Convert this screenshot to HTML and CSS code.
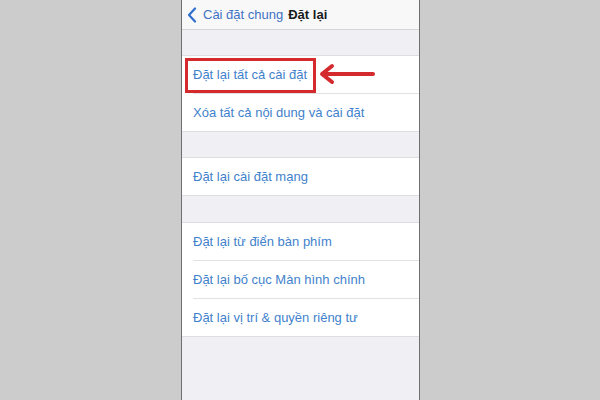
FILE: index.html
```html
<!DOCTYPE html>
<html lang="vi">
<head>
<meta charset="utf-8">
<link rel="stylesheet" href="styles.css">
</head>
<body>
<div class="page">
  <div class="phone">
    <div class="nav">
      <svg class="chev" width="10" height="16" viewBox="0 0 10 16"><path d="M8 1.5 L2 8 L8 14.5" fill="none" stroke="#2f6fd0" stroke-width="2.2" stroke-linecap="round" stroke-linejoin="round"/></svg>
      <span class="back">Cài đặt chung</span>
      <span class="title">Đặt lại</span>
    </div>
    <div class="gap g1"></div>
    <div class="group">
      <div class="row r38">
        <span class="label">Đặt lại tất cả cài đặt</span>
        <div class="hl"></div>
        <svg class="arrow" width="60" height="24" viewBox="0 0 60 24"><path d="M14 4 L4 12 L14 20" fill="none" stroke="#d42a2e" stroke-width="4" stroke-linecap="round" stroke-linejoin="round"/><path d="M5 12 L55 12" stroke="#d42a2e" stroke-width="4" stroke-linecap="round"/></svg>
      </div>
      <div class="row"><span class="label">Xóa tất cả nội dung và cài đặt</span></div>
    </div>
    <div class="gap"></div>
    <div class="group">
      <div class="row"><span class="label">Đặt lại cài đặt mạng</span></div>
    </div>
    <div class="gap g3"></div>
    <div class="group">
      <div class="row r38"><span class="label">Đặt lại từ điển bàn phím</span></div>
      <div class="row r38"><span class="label">Đặt lại bố cục Màn hình chính</span></div>
      <div class="row"><span class="label">Đặt lại vị trí &amp; quyền riêng tư</span></div>
    </div>
  </div>
</div>
</body>
</html>
```

FILE: styles.css
```css
*, *::before, *::after { box-sizing: border-box; }
html, body {
  margin: 0;
  padding: 0;
  background: #cccccc;
  font-family: "Liberation Sans", Arial, sans-serif;
}
.page {
  display: flex;
  justify-content: center;
  width: 600px;
  height: 400px;
  overflow: hidden;
}
.phone {
  margin-left: 1px;
  width: 239px;
  height: 400px;
  background: #efeff4;
  border-left: 1px solid #6f6f6f;
  border-right: 1px solid #6f6f6f;
  display: flex;
  flex-direction: column;
}
.nav {
  height: 30px;
  flex: none;
  background: #f8f8f8;
  border-bottom: 1px solid #d6d6da;
  display: flex;
  align-items: center;
  padding-left: 5px;
  font-size: 13px;
}
.chev {
  margin-right: 6px;
  margin-top: 1px;
}
.back {
  color: #3f72c4;
}
.title {
  color: #1a1a1a;
  font-weight: bold;
  margin-left: 5px;
}
.gap {
  height: 26px;
  flex: none;
  border-bottom: 1px solid #dedee2;
}
.g3 { height: 27px; }
.group {
  flex: none;
  background: #ffffff;
  border-bottom: 1px solid #dedee2;
}
.row {
  position: relative;
  height: 38px;
  margin-left: 11px;
  display: flex;
  align-items: center;
  border-bottom: 1px solid #e2e2e6;
}
.row:last-child {
  border-bottom: none;
  height: 37px;
}
.label {
  color: #3f82cc;
  font-size: 13px;
}
.hl {
  position: absolute;
  left: -8px;
  top: 2px;
  width: 131px;
  height: 35px;
  border: 3px solid #d42a2e;
}
.arrow {
  position: absolute;
  left: 125px;
  top: 6px;
}
```
